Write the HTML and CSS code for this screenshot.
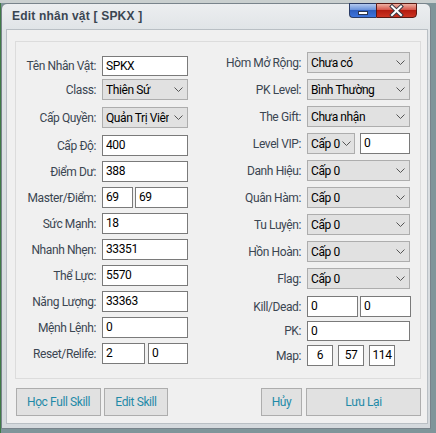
FILE: index.html
```html
<!DOCTYPE html>
<html lang="vi">
<head>
<meta charset="utf-8">
<title>Edit nhân vật [ SPKX ]</title>
<link rel="stylesheet" href="styles.css">
</head>
<body>
<div class="window">
  <div class="titlebar">
    <span class="title">Edit nhân vật [ SPKX ]</span>
    <div class="caption">
      <span class="cbtn min"><svg width="25" height="13" viewBox="0 0 25 13"><rect x="8.5" y="7.5" width="9" height="3" fill="#fff" stroke="#2b3550" stroke-width="1"/></svg></span>
      <span class="cbtn close"><svg width="40" height="13" viewBox="0 0 40 13"><path d="M15 2.5 L24 11 M24 2.5 L15 11" stroke="#3a3a44" stroke-width="4" stroke-linecap="square"/><path d="M15 2.5 L24 11 M24 2.5 L15 11" stroke="#fff" stroke-width="2" stroke-linecap="square"/></svg></span>
    </div>
  </div>
  <div class="client">
    <div class="group">
      <div class="col left">
        <div class="row first"><span class="lbl">Tên Nhân Vật:</span><input class="tb w86 h20" value="SPKX"></div>
        <div class="row selrow"><span class="lbl">Class:</span><div class="sel w86"><span class="v">Thiên Sứ</span><svg class="chev" viewBox="0 0 9 5"><path d="M0.5 0.5 L4.5 4.5 L8.5 0.5" fill="none" stroke="#555" stroke-width="1"/></svg></div></div>
        <div class="row selrow"><span class="lbl">Cấp Quyền:</span><div class="sel w86 clip"><span class="v">Quản Trị Viên</span><svg class="chev" viewBox="0 0 9 5"><path d="M0.5 0.5 L4.5 4.5 L8.5 0.5" fill="none" stroke="#555" stroke-width="1"/></svg></div></div>
        <div class="row"><span class="lbl">Cấp Độ:</span><input class="tb w86" value="400"></div>
        <div class="row"><span class="lbl">Điểm Dư:</span><input class="tb w86" value="388"></div>
        <div class="row"><span class="lbl">Master/Điểm:</span><div class="pair g2"><input class="tb w31" value="69"><input class="tb w53" value="69"></div></div>
        <div class="row"><span class="lbl">Sức Mạnh:</span><input class="tb w86" value="18"></div>
        <div class="row"><span class="lbl">Nhanh Nhẹn:</span><input class="tb w86" value="33351"></div>
        <div class="row"><span class="lbl">Thể Lực:</span><input class="tb w86" value="5570"></div>
        <div class="row"><span class="lbl">Năng Lượng:</span><input class="tb w86" value="33363"></div>
        <div class="row"><span class="lbl">Mệnh Lệnh:</span><input class="tb w86" value="0"></div>
        <div class="row"><span class="lbl">Reset/Relife:</span><div class="pair g3"><input class="tb w43" value="2"><input class="tb w40" value="0"></div></div>
      </div>
      <div class="col right">
        <div class="row"><span class="lbl">Hòm Mở Rộng:</span><div class="sel w103"><span class="v">Chưa có</span><svg class="chev" viewBox="0 0 9 5"><path d="M0.5 0.5 L4.5 4.5 L8.5 0.5" fill="none" stroke="#555" stroke-width="1"/></svg></div></div>
        <div class="row"><span class="lbl">PK Level:</span><div class="sel w103"><span class="v">Bình Thường</span><svg class="chev" viewBox="0 0 9 5"><path d="M0.5 0.5 L4.5 4.5 L8.5 0.5" fill="none" stroke="#555" stroke-width="1"/></svg></div></div>
        <div class="row"><span class="lbl">The Gift:</span><div class="sel w103"><span class="v">Chưa nhận</span><svg class="chev" viewBox="0 0 9 5"><path d="M0.5 0.5 L4.5 4.5 L8.5 0.5" fill="none" stroke="#555" stroke-width="1"/></svg></div></div>
        <div class="row"><span class="lbl">Level VIP:</span><div class="pair g5"><div class="sel w48 compact"><span class="v">Cấp 0</span><svg class="chev" viewBox="0 0 9 5"><path d="M0.5 0.5 L4.5 4.5 L8.5 0.5" fill="none" stroke="#555" stroke-width="1"/></svg></div><input class="tb w50" value="0"></div></div>
        <div class="row"><span class="lbl">Danh Hiệu:</span><div class="sel w103"><span class="v">Cấp 0</span><svg class="chev" viewBox="0 0 9 5"><path d="M0.5 0.5 L4.5 4.5 L8.5 0.5" fill="none" stroke="#555" stroke-width="1"/></svg></div></div>
        <div class="row"><span class="lbl">Quân Hàm:</span><div class="sel w103"><span class="v">Cấp 0</span><svg class="chev" viewBox="0 0 9 5"><path d="M0.5 0.5 L4.5 4.5 L8.5 0.5" fill="none" stroke="#555" stroke-width="1"/></svg></div></div>
        <div class="row"><span class="lbl">Tu Luyện:</span><div class="sel w103"><span class="v">Cấp 0</span><svg class="chev" viewBox="0 0 9 5"><path d="M0.5 0.5 L4.5 4.5 L8.5 0.5" fill="none" stroke="#555" stroke-width="1"/></svg></div></div>
        <div class="row"><span class="lbl">Hồn Hoàn:</span><div class="sel w103"><span class="v">Cấp 0</span><svg class="chev" viewBox="0 0 9 5"><path d="M0.5 0.5 L4.5 4.5 L8.5 0.5" fill="none" stroke="#555" stroke-width="1"/></svg></div></div>
        <div class="row"><span class="lbl">Flag:</span><div class="sel w103"><span class="v">Cấp 0</span><svg class="chev" viewBox="0 0 9 5"><path d="M0.5 0.5 L4.5 4.5 L8.5 0.5" fill="none" stroke="#555" stroke-width="1"/></svg></div></div>
        <div class="row kill"><span class="lbl">Kill/Dead:</span><div class="pair g2"><input class="tb w51" value="0"><input class="tb w51" value="0"></div></div>
        <div class="row tight"><span class="lbl">PK:</span><input class="tb w103 h20" value="0"></div>
        <div class="row tight"><span class="lbl">Map:</span><div class="pair g5"><input class="tb w26 c" value="6"><input class="tb w26 c" value="57"><input class="tb w26 c" value="114"></div></div>
      </div>
    </div>
    <div class="btns">
      <button class="btn b85">Học Full Skill</button>
      <button class="btn b64">Edit Skill</button>
      <button class="btn b41 push">Hủy</button>
      <button class="btn b115">Lưu Lại</button>
    </div>
  </div>
</div>
</body>
</html>
```

FILE: styles.css
```css
html, body {
  margin: 0;
  padding: 0;
}
body {
  width: 436px;
  height: 433px;
  overflow: hidden;
  background:
    linear-gradient(180deg, #c9cfcf 0, #c9cfcf 3px, transparent 3px),
    linear-gradient(90deg, #3f7a46 0, #3f7a46 1px, #7f959a 1px);
  font-family: Roboto, "Liberation Sans", sans-serif;
  font-size: 12px;
  letter-spacing: -0.4px;
}

.window {
  box-sizing: border-box;
  margin: 3px 0 0 1px;
  width: 430px;
  height: 426px;
  border: 1px solid #78838b;
  border-radius: 6px 6px 0 0;
  background: linear-gradient(180deg, #eceef0 0, #dfe3e6 28px, #d4d9dd 100%);
  padding: 0 3px 5px 5px;
  display: flex;
  flex-direction: column;
}

.titlebar {
  height: 27px;
  display: flex;
  align-items: flex-start;
}
.title {
  font-family: "Liberation Sans", Arial, sans-serif;
  font-weight: bold;
  font-size: 12px;
  line-height: 14px;
  letter-spacing: 0.2px;
  color: #3a4652;
  margin: 5px 0 0 5px;
}
.caption {
  margin: -1px 10px 0 auto;
  display: flex;
}
.cbtn {
  box-sizing: border-box;
  display: block;
  height: 15px;
}
.cbtn svg { display: block; }
.min {
  width: 27px;
  border: 1px solid #2a3c66;
  border-right: none;
  border-radius: 0 0 0 4px;
  background: linear-gradient(180deg, #b3c9ef 0, #6a93dc 45%, #2f5fc0 50%, #3d74dc 100%);
}
.close {
  width: 41px;
  border: 1px solid #5b1913;
  border-radius: 0 0 4px 0;
  background: linear-gradient(180deg, #eeb0a2 0, #d6564a 45%, #b41c10 50%, #cc3422 100%);
}

.client {
  flex: 1;
  background: #f0f0f0;
  box-shadow: 0 0 0 1px #b9bfc4;
  padding: 11px 6px 7px 8px;
  display: flex;
  flex-direction: column;
}

.group {
  box-sizing: border-box;
  height: 338px;
  border: 1px solid #dcdcdc;
  padding-top: 10px;
  display: flex;
  gap: 32px;
}
.col {
  display: flex;
  flex-direction: column;
  gap: 5px;
}
.col.left { margin-top: 4px; }
.col.right { gap: 6px; }

.row {
  display: flex;
  align-items: center;
}
.row.first { margin-bottom: -2px; }
.row.selrow { margin-bottom: 2px; }
.row.kill { margin-top: 1px; }
.row.tight { margin-top: -2px; }

.lbl {
  text-align: right;
  margin-right: 6px;
  color: #3b4652;
  white-space: nowrap;
}
.left .lbl { width: 80px; }
.right .lbl { width: 81px; }

.pair { display: flex; }
.g2 { gap: 2px; }
.g3 { gap: 3px; }
.g5 { gap: 5px; }

.tb {
  box-sizing: border-box;
  height: 21px;
  margin: 0;
  border: 1px solid #7a7a7a;
  border-radius: 0;
  background: #fff;
  color: #000;
  font-family: inherit;
  font-size: 12px;
  letter-spacing: inherit;
  padding: 0 2px 1px 3px;
  outline: none;
}
.tb.h20 { height: 20px; }
.tb.c { text-align: center; padding: 0 0 1px 0; }

.sel {
  box-sizing: border-box;
  height: 21px;
  border: 1px solid #adadad;
  background: #e1e1e1;
  color: #000;
  display: flex;
  align-items: center;
  padding: 0 4px 0 3px;
}
.sel .v {
  flex: 1;
  min-width: 0;
  overflow: hidden;
  white-space: nowrap;
}
.sel.clip .v { flex: none; width: 63px; }
.sel.clip .chev { margin-left: auto; }
.chev {
  flex: none;
  width: 9px;
  height: 5px;
  margin-left: 3px;
}
.sel.compact { padding: 0 3px 0 3px; }
.sel.compact .chev { margin-left: 1px; }

.w26 { width: 26px; }
.w31 { width: 31px; }
.w40 { width: 40px; }
.w43 { width: 43px; }
.w48 { width: 48px; }
.w50 { width: 50px; }
.w51 { width: 51px; }
.w53 { width: 53px; }
.w86 { width: 86px; }
.w103 { width: 103px; }

.btns {
  display: flex;
  gap: 3px;
  margin-top: 9px;
  padding-left: 1px;
}
.btn {
  box-sizing: border-box;
  height: 28px;
  margin: 0;
  border: 1px solid #adadad;
  border-radius: 0;
  background: #e1e1e1;
  color: #1f8aa8;
  font-family: inherit;
  font-size: 12px;
  letter-spacing: inherit;
  padding: 0;
}
.btn.push { margin-left: auto; }
.b85 { width: 85px; }
.b64 { width: 64px; }
.b41 { width: 41px; margin-right: 1px; }
.b115 { width: 115px; }
```
